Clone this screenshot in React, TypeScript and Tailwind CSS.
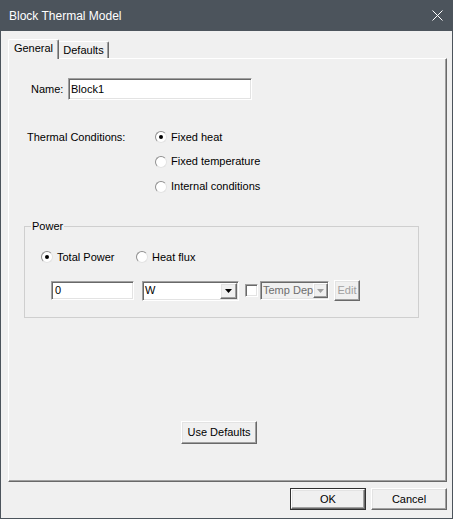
import type { ReactNode } from 'react'

// classic 3D edges
const sunken =
  'border border-t-[#a0a0a0] border-l-[#a0a0a0] border-r-white border-b-white shadow-[inset_1px_1px_0_#696969,inset_-1px_-1px_0_#e3e3e3]'
const raised =
  'border border-t-white border-l-white border-r-[#696969] border-b-[#696969] shadow-[inset_-1px_-1px_0_#a0a0a0,inset_1px_1px_0_#e3e3e3]'

function Radio({ checked, children }: { checked?: boolean; children: ReactNode }) {
  return (
    <div className="flex items-center gap-[4px]">
      <span className="w-[12px] h-[12px] rounded-full bg-white border border-t-[#8f8f8f] border-l-[#8f8f8f] border-r-[#e3e3e3] border-b-[#e3e3e3] flex items-center justify-center">
        {checked && <span className="w-[4px] h-[4px] rounded-full bg-black" />}
      </span>
      <span>{children}</span>
    </div>
  )
}

function Arrow({ color = '#000' }: { color?: string }) {
  return (
    <svg width="7" height="4" viewBox="0 0 7 4">
      <path d="M0 0h7L3.5 4z" fill={color} />
    </svg>
  )
}

function Button({ children, primary, disabled, className }: { children: ReactNode; primary?: boolean; disabled?: boolean; className?: string }) {
  const inner = (
    <div className={`${raised} bg-[#f0f0f0] flex items-center justify-center h-full w-full ${disabled ? 'text-[#a0a0a0]' : 'text-black'}`}>
      {children}
    </div>
  )
  if (primary) {
    return <div className={`border border-[#303030] ${className}`}>{inner}</div>
  }
  return <div className={className}>{inner}</div>
}

export default function App() {
  return (
    <div className="w-[453px] h-[519px] bg-[#4c545c] px-[1px] pb-[1px] flex flex-col font-['Liberation_Sans',Arial,sans-serif] text-[11px] text-black select-none">
      {/* title bar */}
      <div className="h-[31px] shrink-0 flex items-center justify-between pl-[8px] pr-[9px]">
        <span className="text-white text-[12px]">Block Thermal Model</span>
        <svg width="11" height="11" viewBox="0 0 11 11">
          <path d="M0.5 0.5l10 10M10.5 0.5l-10 10" stroke="#fff" strokeWidth="1" />
        </svg>
      </div>

      <div className="flex-1 bg-[#f0f0f0] flex flex-col">
        {/* tabs */}
        <div className="h-[27px] flex items-end pl-[7px]">
          <div className="relative z-10 -mb-[1px] w-[51px] h-[20px] bg-[#f0f0f0] border-t border-l border-t-white border-l-white border-r border-r-[#696969] shadow-[inset_-1px_0_0_#a0a0a0] rounded-t-[2px] flex items-center justify-center pb-[2px]">
            General
          </div>
          <div className="w-[50px] h-[17px] border-t border-t-white border-r border-r-[#696969] shadow-[inset_-1px_0_0_#a0a0a0] rounded-tr-[2px] flex items-center justify-center">
            Defaults
          </div>
        </div>

        {/* tab page */}
        <div className="ml-[7px] mr-[5px] h-[424px] border border-t-white border-l-white border-r-[#696969] border-b-[#696969] shadow-[inset_-1px_-1px_0_#a0a0a0] flex flex-col">
          <div className="mt-[19px] h-[22px] pl-[22px] flex items-center">
            <span className="w-[37px]">Name:</span>
            <div className={`${sunken} bg-white w-[184px] h-[22px] flex items-center pl-[2px]`}>Block1</div>
          </div>

          <div className="mt-[25px] flex">
            <div className="w-[146px] pl-[18px] h-[24px] flex items-center">Thermal Conditions:</div>
            <div className="flex flex-col">
              <div className="h-[24px] flex items-center">
                <Radio checked>Fixed heat</Radio>
              </div>
              <div className="h-[25px] flex items-center">
                <Radio>Fixed temperature</Radio>
              </div>
              <div className="h-[25px] flex items-center">
                <Radio>Internal conditions</Radio>
              </div>
            </div>
          </div>

          {/* Power group */}
          <div className="mt-[27px] ml-[15px] w-[395px] h-[92px] border border-[#cfcfcf] flex flex-col">
            <div className="-mt-[7px] ml-[6px] w-fit px-[1px] bg-[#f0f0f0] leading-[13px]">Power</div>
            <div className="mt-[14px] h-[20px] pl-[16px] flex items-center">
              <div className="w-[95px]">
                <Radio checked>Total Power</Radio>
              </div>
              <Radio>Heat flux</Radio>
            </div>
            <div className="mt-[13px] pl-[26px] h-[21px] flex items-center">
              <div className={`${sunken} bg-white w-[83px] h-[19px] flex items-center pl-[3px]`}>0</div>
              <div className={`${sunken} bg-white ml-[8px] w-[97px] h-[20px] flex items-center justify-between pl-[2px] pr-[1px]`}>
                <span>W</span>
                <div className={`${raised} bg-[#f0f0f0] w-[17px] h-[16px] shrink-0 flex items-center justify-center`}>
                  <Arrow />
                </div>
              </div>
              <span className={`${sunken} bg-white ml-[6px] w-[13px] h-[13px]`} />
              <div className={`${sunken} bg-[#f0f0f0] ml-[2px] w-[69px] h-[19px] flex items-center justify-between pl-[2px] pr-[1px] text-[#6d6d6d] whitespace-nowrap overflow-hidden`}>
                <span>Temp Dep</span>
                <div className={`${raised} bg-[#f0f0f0] w-[15px] h-[15px] shrink-0 flex items-center justify-center`}>
                  <Arrow color="#a0a0a0" />
                </div>
              </div>
              <Button disabled className="ml-[5px] w-[26px] h-[21px]">Edit</Button>
            </div>
          </div>

          <Button className="mt-[103px] ml-[172px] w-[76px] h-[23px]">Use Defaults</Button>
        </div>

        {/* dialog buttons */}
        <div className="mt-[6px] pr-[5px] flex justify-end gap-[5px]">
          <Button primary className="w-[76px] h-[22px]">OK</Button>
          <Button className="w-[76px] h-[22px]">Cancel</Button>
        </div>
      </div>
    </div>
  )
}
